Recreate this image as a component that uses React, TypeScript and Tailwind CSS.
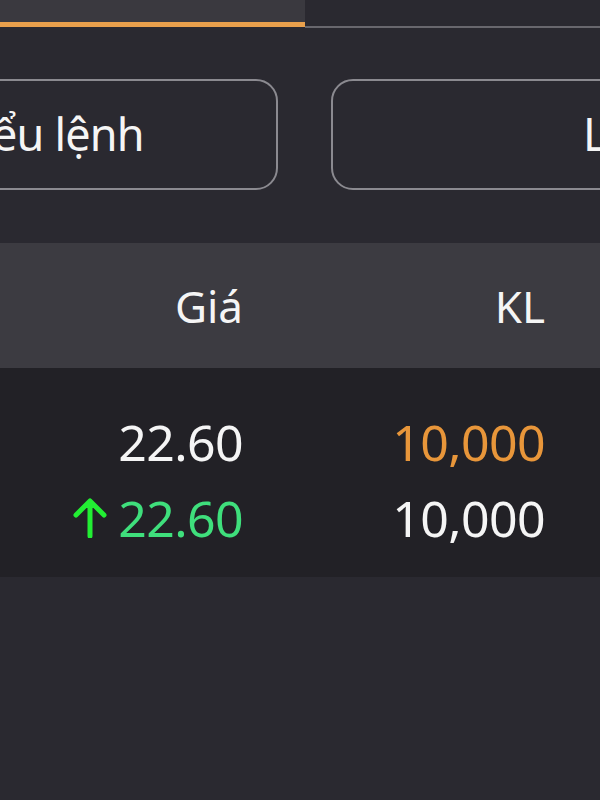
import React from "react";

function UpArrow() {
  return (
    <svg width="34" height="40" viewBox="0 0 34 40" className="shrink-0">
      <path d="M17 38 V4 M3 17 L17 3 L31 17" fill="none" stroke="#22ee33" strokeWidth="5" strokeLinecap="round" strokeLinejoin="round" />
    </svg>
  );
}

export default function App() {
  return (
    <div className="w-[600px] h-[800px] overflow-hidden bg-[#2a2930] text-[#f5f5f5]" style={{ fontFamily: '"Noto Sans", "Open Sans", sans-serif' }}>
      <div className="flex h-[28px]">
        <div className="w-[305px] h-[27px] bg-[#3a393f] border-b-[5px] border-[#e9a04c]" />
        <div className="flex-1 h-[28px] border-b-2 border-[#68676d]" />
      </div>
      <div className="mt-[51px] flex gap-[53px] -ml-[174px]">
        <div className="w-[452px] h-[111px] shrink-0 rounded-[22px] border-2 border-[#8b8a90] flex items-center justify-center text-[45px] tracking-[-0.8px] leading-none pb-[2px] pr-[6px]">
          Kiểu lệnh
        </div>
        <div className="w-[452px] h-[111px] shrink-0 rounded-[22px] border-2 border-[#8b8a90] flex items-center pl-[250px] text-[45px] leading-none pb-[2px]">
          Lệnh
        </div>
      </div>
      <div className="mt-[53px] h-[125px] bg-[#3c3b41] flex items-center text-[44px] leading-none">
        <div className="w-[243px] text-right">Giá</div>
        <div className="w-[302px] text-right">KL</div>
      </div>
      <div className="h-[209px] bg-[#222126] pt-[52px] text-[50px] leading-none tracking-[-0.6px]">
        <div className="flex items-center h-[44px]">
          <div className="w-[243px] text-right">22.60</div>
          <div className="w-[302px] text-right text-[#e8963a]">10,000</div>
        </div>
        <div className="flex items-center h-[44px] mt-[32px]">
          <div className="w-[243px] flex items-center justify-end gap-[11px]">
            <UpArrow />
            <span className="text-[#3fdf7c]">22.60</span>
          </div>
          <div className="w-[302px] text-right">10,000</div>
        </div>
      </div>
    </div>
  );
}
